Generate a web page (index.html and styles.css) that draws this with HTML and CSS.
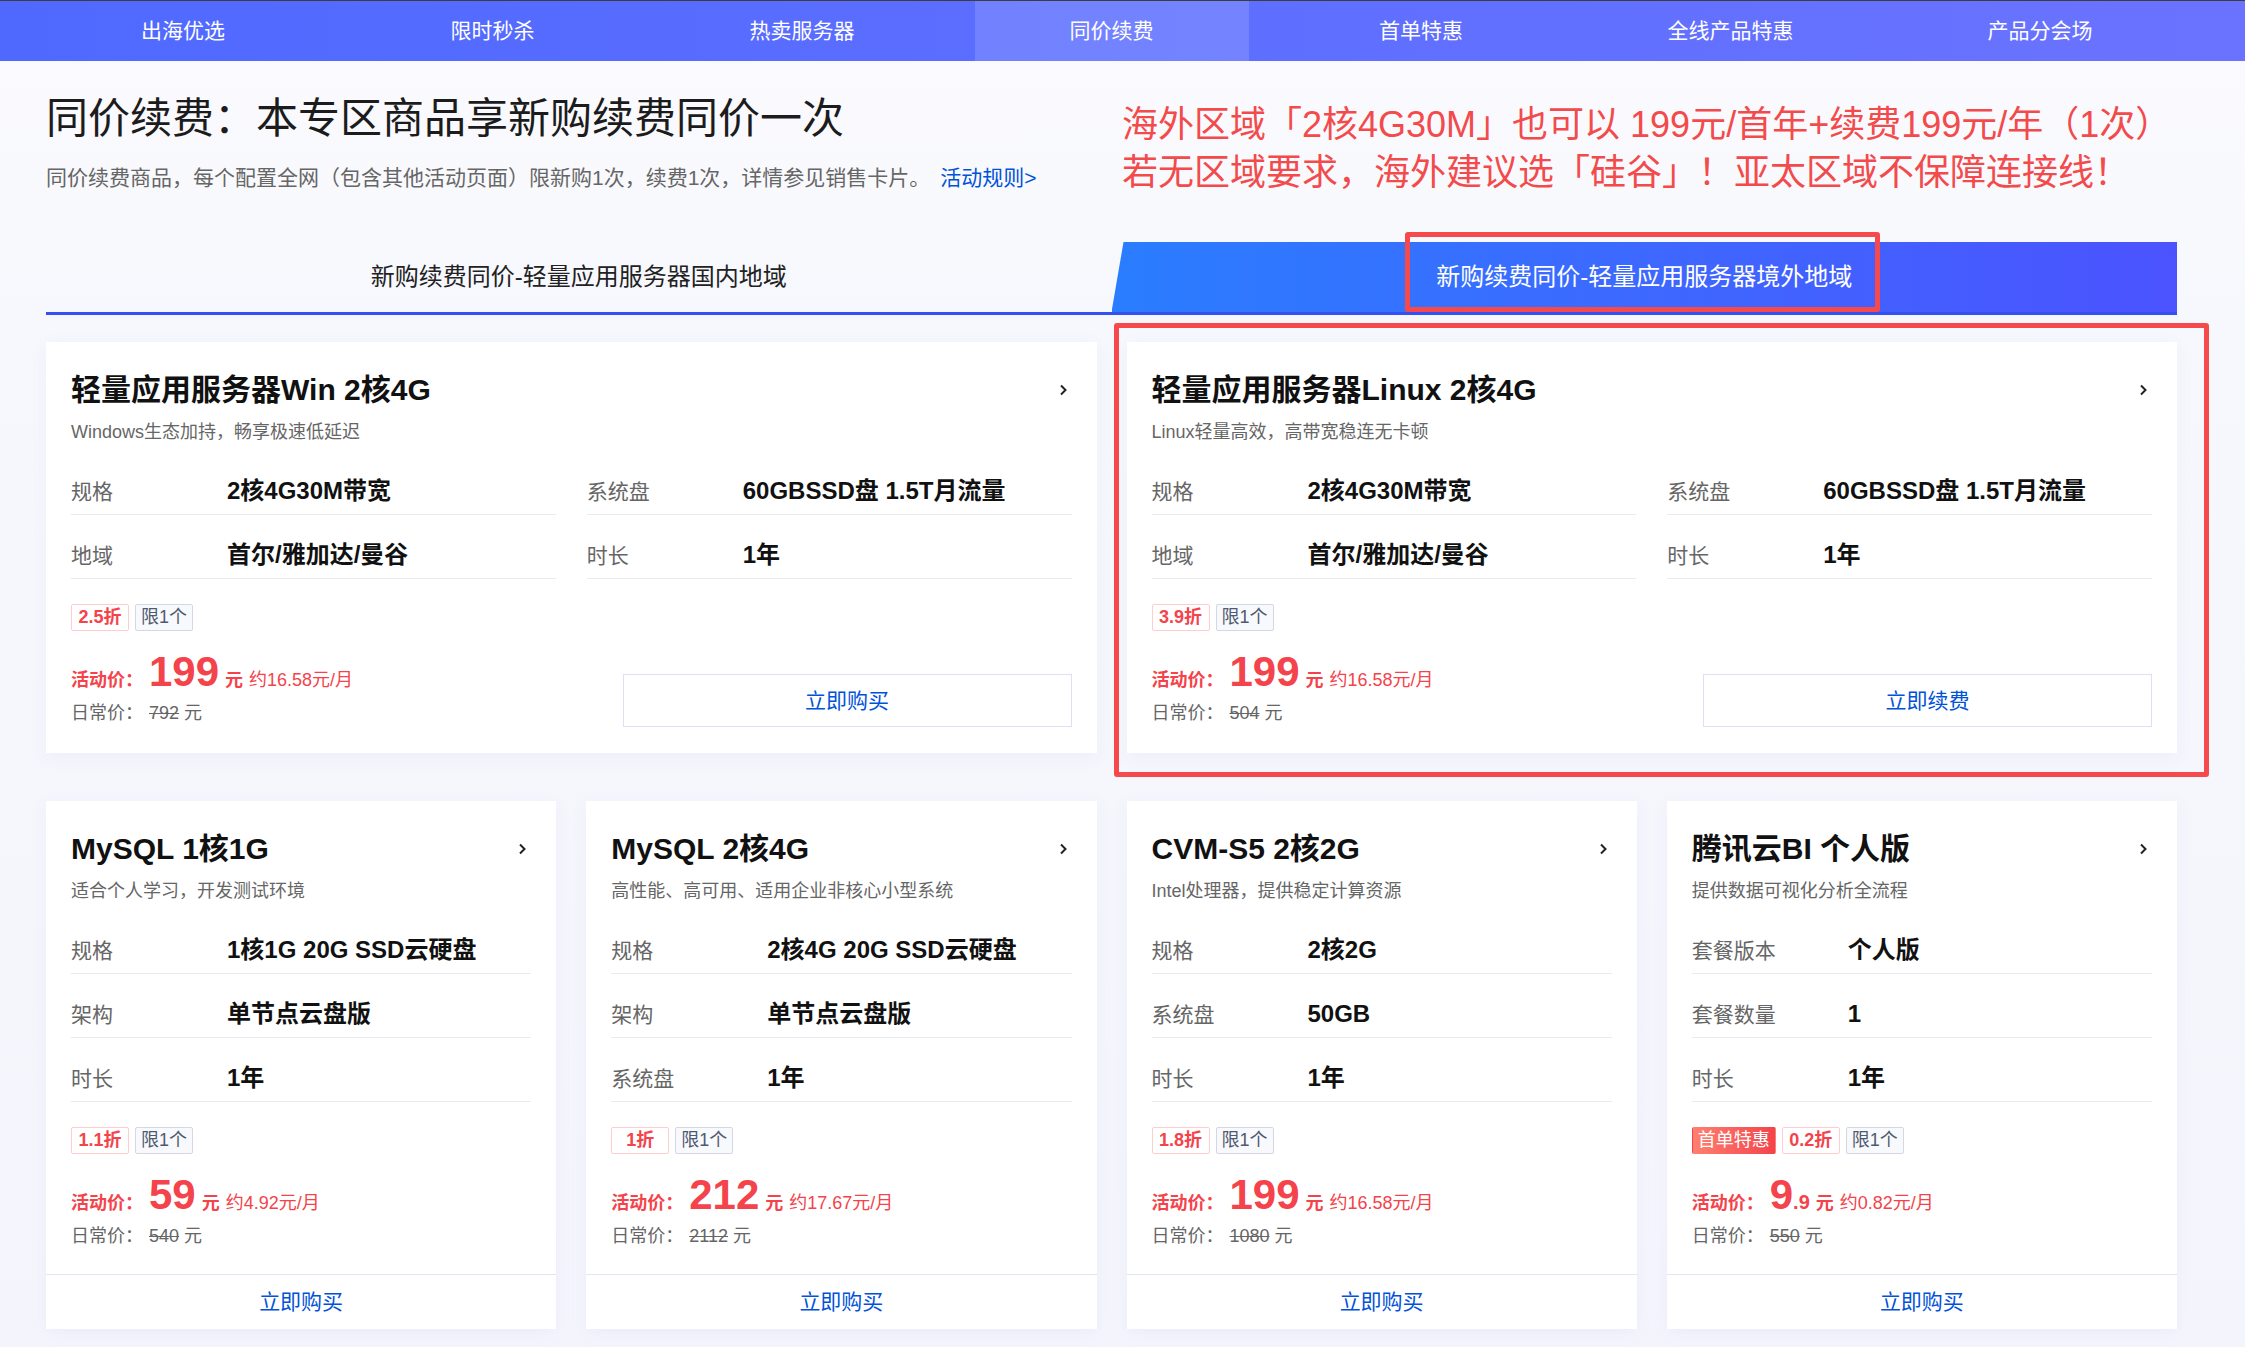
FILE: index.html
```html
<!DOCTYPE html>
<html lang="zh-CN">
<head>
  <meta charset="UTF-8">
  <meta name="viewport" content="width=device-width, initial-scale=1.0">
  <title>同价续费</title>
  <link rel="stylesheet" href="styles.css">
</head>
<body>
  <div class="topbar">
    <ul class="nav">
      <li>出海优选</li>
      <li>限时秒杀</li>
      <li>热卖服务器</li>
      <li class="active">同价续费</li>
      <li>首单特惠</li>
      <li>全线产品特惠</li>
      <li>产品分会场</li>
    </ul>
  </div>

  <div class="page">
    <div class="intro">
      <div class="intro-main">
        <h1>同价续费：本专区商品享新购续费同价一次</h1>
        <p class="desc">同价续费商品，每个配置全网（包含其他活动页面）限新购1次，续费1次，详情参见销售卡片。<a href="#">活动规则&gt;</a></p>
      </div>
      <div class="notice">
        <p>海外区域「2核4G30M」也可以 199元/首年+续费199元/年（1次）</p>
        <p>若无区域要求，海外建议选「硅谷」！亚太区域不保障连接线！</p>
      </div>
    </div>

    <div class="tabs">
      <div class="tab"><span>新购续费同价-轻量应用服务器国内地域</span></div>
      <div class="tab active"><span>新购续费同价-轻量应用服务器境外地域</span><i class="mark tab-mark"></i></div>
    </div>

    <!-- lighthouse cards -->
    <div class="grid grid-2">
      <div class="card">
        <div class="card-head">
          <span class="card-title">轻量应用服务器Win 2核4G</span>
          <svg class="chev" width="9" height="12" viewBox="0 0 9 12"><path d="M2 1.5l4.5 4.5L2 10.5" fill="none" stroke="#222" stroke-width="2"/></svg>
        </div>
        <p class="card-desc">Windows生态加持，畅享极速低延迟</p>
        <div class="specs specs-2">
          <div class="spec"><span class="spec-k">规格</span><span class="spec-v">2核4G30M带宽</span></div>
          <div class="spec"><span class="spec-k">系统盘</span><span class="spec-v">60GBSSD盘 1.5T月流量</span></div>
          <div class="spec"><span class="spec-k">地域</span><span class="spec-v">首尔/雅加达/曼谷</span></div>
          <div class="spec"><span class="spec-k">时长</span><span class="spec-v">1年</span></div>
        </div>
        <div class="deal">
          <div>
            <div class="tags"><span class="tag off">2.5折</span><span class="tag limit">限1个</span></div>
            <div class="price-now"><span class="lbl">活动价：</span><span class="num">199</span><span class="unit">元</span><span class="per">约16.58元/月</span></div>
            <div class="price-old">日常价：<del>792</del> 元</div>
          </div>
          <a class="btn-line" href="#">立即购买</a>
        </div>
      </div>

      <div class="card marked">
        <div class="card-head">
          <span class="card-title">轻量应用服务器Linux 2核4G</span>
          <svg class="chev" width="9" height="12" viewBox="0 0 9 12"><path d="M2 1.5l4.5 4.5L2 10.5" fill="none" stroke="#222" stroke-width="2"/></svg>
        </div>
        <p class="card-desc">Linux轻量高效，高带宽稳连无卡顿</p>
        <div class="specs specs-2">
          <div class="spec"><span class="spec-k">规格</span><span class="spec-v">2核4G30M带宽</span></div>
          <div class="spec"><span class="spec-k">系统盘</span><span class="spec-v">60GBSSD盘 1.5T月流量</span></div>
          <div class="spec"><span class="spec-k">地域</span><span class="spec-v">首尔/雅加达/曼谷</span></div>
          <div class="spec"><span class="spec-k">时长</span><span class="spec-v">1年</span></div>
        </div>
        <div class="deal">
          <div>
            <div class="tags"><span class="tag off">3.9折</span><span class="tag limit">限1个</span></div>
            <div class="price-now"><span class="lbl">活动价：</span><span class="num">199</span><span class="unit">元</span><span class="per">约16.58元/月</span></div>
            <div class="price-old">日常价：<del>504</del> 元</div>
          </div>
          <a class="btn-line" href="#">立即续费</a>
        </div>
        <i class="mark card-mark"></i>
      </div>
    </div>

    <!-- other products -->
    <div class="grid grid-4">
      <div class="card card-sm">
        <div class="card-head">
          <span class="card-title">MySQL 1核1G</span>
          <svg class="chev" width="9" height="12" viewBox="0 0 9 12"><path d="M2 1.5l4.5 4.5L2 10.5" fill="none" stroke="#222" stroke-width="2"/></svg>
        </div>
        <p class="card-desc">适合个人学习，开发测试环境</p>
        <div class="specs">
          <div class="spec"><span class="spec-k">规格</span><span class="spec-v">1核1G 20G SSD云硬盘</span></div>
          <div class="spec"><span class="spec-k">架构</span><span class="spec-v">单节点云盘版</span></div>
          <div class="spec"><span class="spec-k">时长</span><span class="spec-v">1年</span></div>
        </div>
        <div class="tags"><span class="tag off">1.1折</span><span class="tag limit">限1个</span></div>
        <div class="price-now"><span class="lbl">活动价：</span><span class="num">59</span><span class="unit">元</span><span class="per">约4.92元/月</span></div>
        <div class="price-old">日常价：<del>540</del> 元</div>
        <a class="card-foot" href="#">立即购买</a>
      </div>

      <div class="card card-sm">
        <div class="card-head">
          <span class="card-title">MySQL 2核4G</span>
          <svg class="chev" width="9" height="12" viewBox="0 0 9 12"><path d="M2 1.5l4.5 4.5L2 10.5" fill="none" stroke="#222" stroke-width="2"/></svg>
        </div>
        <p class="card-desc">高性能、高可用、适用企业非核心小型系统</p>
        <div class="specs">
          <div class="spec"><span class="spec-k">规格</span><span class="spec-v">2核4G 20G SSD云硬盘</span></div>
          <div class="spec"><span class="spec-k">架构</span><span class="spec-v">单节点云盘版</span></div>
          <div class="spec"><span class="spec-k">系统盘</span><span class="spec-v">1年</span></div>
        </div>
        <div class="tags"><span class="tag off">1折</span><span class="tag limit">限1个</span></div>
        <div class="price-now"><span class="lbl">活动价：</span><span class="num">212</span><span class="unit">元</span><span class="per">约17.67元/月</span></div>
        <div class="price-old">日常价：<del>2112</del> 元</div>
        <a class="card-foot" href="#">立即购买</a>
      </div>

      <div class="card card-sm">
        <div class="card-head">
          <span class="card-title">CVM-S5 2核2G</span>
          <svg class="chev" width="9" height="12" viewBox="0 0 9 12"><path d="M2 1.5l4.5 4.5L2 10.5" fill="none" stroke="#222" stroke-width="2"/></svg>
        </div>
        <p class="card-desc">Intel处理器，提供稳定计算资源</p>
        <div class="specs">
          <div class="spec"><span class="spec-k">规格</span><span class="spec-v">2核2G</span></div>
          <div class="spec"><span class="spec-k">系统盘</span><span class="spec-v">50GB</span></div>
          <div class="spec"><span class="spec-k">时长</span><span class="spec-v">1年</span></div>
        </div>
        <div class="tags"><span class="tag off">1.8折</span><span class="tag limit">限1个</span></div>
        <div class="price-now"><span class="lbl">活动价：</span><span class="num">199</span><span class="unit">元</span><span class="per">约16.58元/月</span></div>
        <div class="price-old">日常价：<del>1080</del> 元</div>
        <a class="card-foot" href="#">立即购买</a>
      </div>

      <div class="card card-sm">
        <div class="card-head">
          <span class="card-title">腾讯云BI 个人版</span>
          <svg class="chev" width="9" height="12" viewBox="0 0 9 12"><path d="M2 1.5l4.5 4.5L2 10.5" fill="none" stroke="#222" stroke-width="2"/></svg>
        </div>
        <p class="card-desc">提供数据可视化分析全流程</p>
        <div class="specs">
          <div class="spec"><span class="spec-k">套餐版本</span><span class="spec-v">个人版</span></div>
          <div class="spec"><span class="spec-k">套餐数量</span><span class="spec-v">1</span></div>
          <div class="spec"><span class="spec-k">时长</span><span class="spec-v">1年</span></div>
        </div>
        <div class="tags"><span class="tag hot">首单特惠</span><span class="tag off">0.2折</span><span class="tag limit">限1个</span></div>
        <div class="price-now"><span class="lbl">活动价：</span><span class="num">9</span><span class="dec">.9</span><span class="unit">元</span><span class="per">约0.82元/月</span></div>
        <div class="price-old">日常价：<del>550</del> 元</div>
        <a class="card-foot" href="#">立即购买</a>
      </div>
    </div>
  </div>
</body>
</html>
```

FILE: styles.css
```css
* {
  margin: 0;
  padding: 0;
  box-sizing: border-box;
}

body {
  font-family: "Liberation Sans", "Noto Sans CJK SC", sans-serif;
  background: linear-gradient(180deg, #fbfbfe 0, #f7f8fd 320px, #f4f5fc 100%);
  color: #222;
  min-height: 1347px;
}

a {
  text-decoration: none;
}

/* top navigation */
.topbar {
  border-top: 1px solid #3d3d3d;
  height: 61px;
  background: linear-gradient(90deg, #4f69ff, #6a73ff);
}

.nav {
  list-style: none;
  display: flex;
  justify-content: space-between;
  width: 2131px;
  margin-left: 46px;
}

.nav li {
  width: 274px;
  line-height: 60px;
  text-align: center;
  font-size: 21px;
  color: #fff;
}

.nav li.active {
  background-color: rgba(255, 255, 255, 0.14);
}

.page {
  width: 2131px;
  margin-left: 46px;
  padding-bottom: 19px;
}

/* page heading */
.intro {
  display: flex;
  padding-top: 30px;
}

.intro-main {
  flex: 0 0 1076px;
}

.intro h1 {
  font-size: 42px;
  line-height: 56px;
  font-weight: normal;
  color: #1c1c1c;
}

.desc {
  margin-top: 16px;
  font-size: 21px;
  line-height: 30px;
  color: #666;
}

.desc a {
  color: #0052d9;
  margin-left: 10px;
}

.notice {
  margin-top: 10px;
  font-size: 36px;
  line-height: 48px;
  color: #f34a4c;
  white-space: nowrap;
}

/* region tabs */
.tabs {
  margin-top: 45px;
  display: grid;
  grid-template-columns: 1fr 1fr;
  border-bottom: 3px solid #3350f2;
}

.tab {
  height: 70px;
  line-height: 70px;
  text-align: center;
  font-size: 24px;
  color: #222;
}

.tab.active {
  position: relative;
  color: #fff;
}

.tab.active::before {
  content: "";
  position: absolute;
  top: 0;
  left: 0;
  right: 0;
  bottom: 0;
  background: linear-gradient(90deg, #2a7dff, #3f66ff 55%, #4b53ff);
  clip-path: polygon(12px 0, 100% 0, 100% 100%, 0 100%);
}

.tab span {
  position: relative;
}

/* red outline marks */
.mark {
  position: absolute;
  border: 5px solid #f6494c;
  border-radius: 3px;
}

.tab-mark {
  left: 293px;
  top: -10px;
  width: 475px;
  height: 80px;
}

.card-mark {
  left: -13px;
  top: -19px;
  right: -32px;
  bottom: -24px;
}

/* product cards */
.grid {
  display: grid;
  column-gap: 30px;
}

.grid-2 {
  margin-top: 27px;
  grid-template-columns: 1fr 1fr;
}

.grid-4 {
  margin-top: 48px;
  grid-template-columns: repeat(4, 1fr);
}

.card {
  background-color: #fff;
  padding: 28px 25px;
  box-shadow: 0 4px 16px rgba(110, 120, 200, 0.07);
}

.card.marked {
  position: relative;
}

.card-sm {
  padding-bottom: 0;
  display: flex;
  flex-direction: column;
}

.card-head {
  display: flex;
  justify-content: space-between;
  align-items: center;
  height: 40px;
}

.card-title {
  font-size: 30px;
  line-height: 40px;
  font-weight: bold;
  color: #111;
}

.chev {
  margin-right: 4px;
}

.card-desc {
  margin-top: 9px;
  font-size: 18px;
  line-height: 26px;
  color: #666;
}

.specs {
  margin-top: 6px;
  display: grid;
}

.specs-2 {
  grid-template-columns: 1fr 1fr;
  column-gap: 31px;
}

.spec {
  display: flex;
  align-items: baseline;
  height: 64px;
  padding-top: 26px;
  font-size: 21px;
  line-height: 28px;
  border-bottom: 1px solid #e9ebf2;
}

.spec-k {
  flex: 0 0 156px;
  color: #666;
}

.spec-v {
  font-size: 24px;
  font-weight: bold;
  color: #111;
}

.tags {
  margin-top: 25px;
  display: flex;
  gap: 6px;
}

.tag {
  min-width: 58px;
  height: 27px;
  padding: 0 5px;
  border: 1px solid;
  border-radius: 2px;
  font-size: 18px;
  line-height: 25px;
  text-align: center;
}

.tag.off {
  color: #f4434b;
  font-weight: bold;
  border-color: #ffcdd0;
}

.tag.limit {
  color: #4f5a70;
  background-color: #f8f9fc;
  border-color: #d3d8e3;
}

.tag.hot {
  color: #fff;
  border-color: transparent;
  background: linear-gradient(90deg, #ff8070, #f4434b);
}

.price-now {
  display: flex;
  align-items: baseline;
  margin-top: 20px;
  line-height: 1;
  color: #f4434b;
}

.price-now .lbl {
  font-size: 18px;
  font-weight: bold;
}

.price-now .num {
  margin-left: 6px;
  font-size: 42px;
  font-weight: bold;
}

.price-now .dec {
  font-size: 20px;
  font-weight: bold;
}

.price-now .unit {
  margin-left: 6px;
  font-size: 18px;
  font-weight: bold;
}

.price-now .per {
  margin-left: 6px;
  font-size: 18px;
}

.price-old {
  margin-top: 8px;
  font-size: 18px;
  line-height: 24px;
  color: #666;
}

.price-old del {
  margin-left: 6px;
  color: #666;
}

.deal {
  display: flex;
  justify-content: space-between;
  align-items: flex-end;
}

.btn-line {
  width: 449px;
  height: 53px;
  margin-bottom: -2px;
  border: 1px solid #dcdff6;
  font-size: 21px;
  line-height: 51px;
  text-align: center;
  color: #0052d9;
}

.card-foot {
  margin: 26px -25px 0;
  border-top: 1px solid #e3e5f7;
  height: 55px;
  line-height: 54px;
  font-size: 21px;
  text-align: center;
  color: #0052d9;
}
```
